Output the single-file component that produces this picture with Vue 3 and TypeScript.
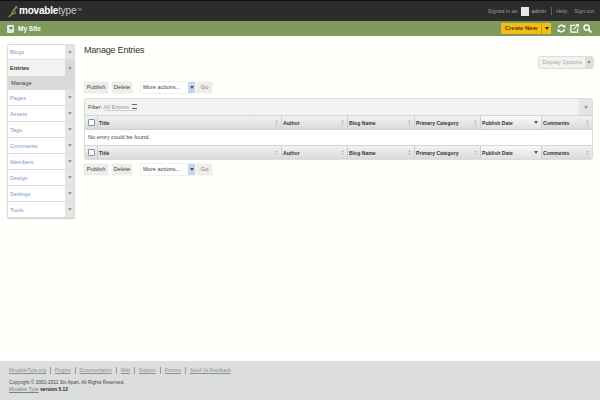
<script setup lang="ts">
interface NavItem { label: string; active?: boolean; sub?: string }
const nav: NavItem[] = [
  { label: 'Blogs' },
  { label: 'Entries', active: true, sub: 'Manage' },
  { label: 'Pages' },
  { label: 'Assets' },
  { label: 'Tags' },
  { label: 'Comments' },
  { label: 'Members' },
  { label: 'Design' },
  { label: 'Settings' },
  { label: 'Tools' },
]
const cols = [
  { label: 'Title', w: 184 },
  { label: 'Author', w: 66 },
  { label: 'Blog Name', w: 67 },
  { label: 'Primary Category', w: 66 },
  { label: 'Publish Date', w: 61, sorted: true },
  { label: 'Comments', w: 51 },
]
const links = ['MovableType.org', 'Plugins', 'Documentation', 'Wiki', 'Support', 'Forums', 'Send Us Feedback']
</script>

<template>
  <div class="page">
    <header class="top">
      <div class="logo">
        <svg width="10" height="13" viewBox="0 0 10 13" class="logo-mark">
          <path d="M0.8 12 L3 10 C4 9 4 7.5 5 6 L9 1.2" stroke="#7f9a5c" stroke-width="1.4" fill="none" />
          <path d="M3.4 8.6 H7 V5.4 M7 1.6 L9.6 3.4" stroke="#7f9a5c" stroke-width="1.1" fill="none" />
        </svg>
        <span class="logo-a">movable</span><span class="logo-b">type</span><sup class="tm">TM</sup>
      </div>
      <div class="user">
        <span>Signed in as</span>
        <span class="avatar"></span>
        <span class="uname">admin</span>
        <span class="sep"></span>
        <span>Help</span>
        <span class="signout">Sign out</span>
      </div>
    </header>

    <div class="sitebar">
      <div class="site">
        <span class="site-ico"><span class="site-tri"></span></span>
        <span>My Site</span>
      </div>
      <div class="tools">
        <div class="create">
          <span class="create-label">Create New</span>
          <span class="create-arrow"><i class="tri dark"></i></span>
        </div>
        <svg width="9" height="9" viewBox="0 0 10 10" class="tool">
          <path d="M1.5 4 A3.6 3.6 0 0 1 8 3 M8.5 6 A3.6 3.6 0 0 1 2 7" stroke="#fff" stroke-width="1.7" fill="none" />
          <path d="M9.5 0.8 L9.2 4.4 L5.9 3.2 Z M0.5 9.2 L0.8 5.6 L4.1 6.8 Z" fill="#fff" />
        </svg>
        <svg width="9" height="9" viewBox="0 0 10 10" class="tool">
          <path d="M6 1.5 H1 V9 H8.5 V5" stroke="#fff" stroke-width="1.4" fill="none" />
          <path d="M4 6 L9 1 M6.5 0.6 H9.6 V3.6" stroke="#fff" stroke-width="1.2" fill="none" />
        </svg>
        <svg width="9" height="9" viewBox="0 0 10 10" class="tool">
          <circle cx="4" cy="4" r="2.9" stroke="#fff" stroke-width="1.5" fill="none" />
          <path d="M6 6 L9.4 9.4" stroke="#fff" stroke-width="2" />
        </svg>
      </div>
    </div>

    <div class="body">
      <nav class="side">
        <template v-for="n in nav" :key="n.label">
          <div class="nav-row" :class="{ active: n.active }">
            <span class="nav-label">{{ n.label }}</span>
            <span class="nav-arrow"><i class="tri grey"></i></span>
          </div>
          <div v-if="n.sub" class="nav-sub">{{ n.sub }}</div>
        </template>
      </nav>

      <main class="main">
        <div class="title-row">
          <h1>Manage Entries</h1>
          <div class="display">
            <span class="display-label">Display Options</span>
            <span class="display-arrow"><i class="tri grey"></i></span>
          </div>
        </div>

        <div class="actions">
          <span class="btn">Publish</span>
          <span class="btn">Delete</span>
          <span class="select">More actions...<span class="sel-arrow"><i class="tri navy"></i></span></span>
          <span class="btn go">Go</span>
        </div>

        <section class="panel">
          <div class="filter">
            <span class="filter-text">Filter: <span class="filter-val">All Entries <b class="lines"></b></span></span>
            <span class="filter-arrow"><i class="tri grey"></i></span>
          </div>
          <div class="thead">
            <span class="check"><i></i></span>
            <span v-for="c in cols" :key="c.label" class="th" :class="{ sorted: c.sorted }" :style="{ width: c.w + 'px' }">
              {{ c.label }}
              <i v-if="c.sorted" class="tri navy"></i>
              <svg v-else width="3" height="5" viewBox="0 0 3 5"><path d="M1.5 0 L3 2 H0 Z M1.5 5 L3 3 H0 Z" fill="#bcbcbc" /></svg>
            </span>
          </div>
          <div class="empty">No entry could be found.</div>
          <div class="thead">
            <span class="check"><i></i></span>
            <span v-for="c in cols" :key="c.label" class="th" :class="{ sorted: c.sorted }" :style="{ width: c.w + 'px' }">
              {{ c.label }}
              <i v-if="c.sorted" class="tri navy"></i>
              <svg v-else width="3" height="5" viewBox="0 0 3 5"><path d="M1.5 0 L3 2 H0 Z M1.5 5 L3 3 H0 Z" fill="#bcbcbc" /></svg>
            </span>
          </div>
        </section>

        <div class="actions lower">
          <span class="btn">Publish</span>
          <span class="btn">Delete</span>
          <span class="select">More actions...<span class="sel-arrow"><i class="tri navy"></i></span></span>
          <span class="btn go">Go</span>
        </div>
      </main>
    </div>

    <footer class="foot">
      <div class="links">
        <span v-for="l in links" :key="l" class="flink"><u>{{ l }}</u></span>
      </div>
      <div class="copy">Copyright © 2001-2011 Six Apart. All Rights Reserved.</div>
      <div class="ver"><u>Movable Type</u> <b>version 5.12</b></div>
    </footer>
  </div>
</template>

<style scoped>
.page {
  width: 600px;
  height: 400px;
  display: flex;
  flex-direction: column;
  overflow: hidden;
  background: #fffffb;
  font-family: "Liberation Sans", Arial, sans-serif;
  font-size: 5.7px;
  color: #444;
}
.top {
  height: 21px;
  flex: none;
  box-sizing: border-box;
  background: #2c2c2a;
  border-top: 1px solid #111;
  display: flex;
  align-items: center;
  justify-content: space-between;
  padding: 0 6px 0 8px;
}
.logo { display: flex; align-items: baseline; color: #fff; font-size: 10px; letter-spacing: -0.2px; }
.logo-mark { align-self: center; margin-right: 1px; }
.logo-a { font-weight: bold; }
.logo-b { font-weight: normal; color: #ccc; }
.tm { font-size: 3px; color: #aaa; margin-left: 1px; align-self: flex-start; margin-top: 3px; }
.user { display: flex; align-items: center; color: #9a9a9a; font-size: 5.4px; }
.avatar { width: 8px; height: 9px; background: #e6e6e6; margin: 0 2px 0 4px; }
.uname { color: #aaa; }
.sep { width: 1px; height: 8px; background: #666; margin: 0 4px 0 5px; }
.signout { margin-left: 7px; }
.sitebar {
  height: 15px;
  flex: none;
  background: #7f9a5c;
  display: flex;
  align-items: center;
  justify-content: space-between;
  padding: 0 8px 0 7px;
}
.site { display: flex; align-items: center; gap: 4px; color: #fff; font-weight: bold; font-size: 6.5px; }
.site-ico {
  width: 7px;
  height: 8px;
  background: #e4e6e0;
  border-radius: 1px;
  display: flex;
  align-items: center;
  justify-content: center;
}
.site-tri { border-top: 3px solid #777; border-left: 2px solid transparent; border-right: 2px solid transparent; }
.tools { display: flex; align-items: center; }
.create {
  display: flex;
  height: 11px;
  background: #f3bd13;
  margin-right: 6px;
  color: #5a4400;
  font-weight: bold;
  font-size: 6px;
  line-height: 11px;
}
.create-label { width: 40px; text-align: center; }
.create-arrow {
  width: 9px;
  border-left: 1px solid #c99a0c;
  display: flex;
  align-items: center;
  justify-content: center;
}
.tool { margin-left: 4px; }
.tool:first-of-type { margin-left: 0; }
.tri {
  display: inline-block;
  width: 0;
  height: 0;
  border-top: 3px solid #888;
  border-left: 2px solid transparent;
  border-right: 2px solid transparent;
}
.tri.dark { border-top-color: #222; }
.tri.grey { border-top-color: #999; }
.tri.navy { border-top-color: #39598c; }

.body { flex: 1; min-height: 0; display: flex; align-items: flex-start; padding: 8px 6px 0 7px; }
.side {
  width: 68px;
  flex: none;
  box-sizing: border-box;
  border: 1px solid #dcdcdc;
  border-radius: 2px;
  background: #fff;
  box-shadow: 0 1px 1px #ccc;
}
.nav-row {
  height: 16px;
  box-sizing: border-box;
  display: flex;
  align-items: center;
  border-bottom: 1px solid #dedede;
  color: #7d9ac4;
}
.nav-row:first-child { height: 15px; }
.nav-row:last-child { border-bottom: 0; height: 15px; }
.nav-row.active { background: #f2f2f0; color: #333; font-weight: bold; border-bottom: 0; }
.nav-label { flex: 1; padding-left: 2px; }
.nav-arrow {
  width: 9px;
  align-self: stretch;
  background: #e4e5e3;
  display: flex;
  align-items: center;
  justify-content: center;
}
.active .nav-arrow { background: #d9dad8; }
.nav-sub {
  height: 14px;
  line-height: 14px;
  padding-left: 3px;
  background: #d9dad8;
  color: #444;
}

.main { flex: 1; min-width: 0; margin-left: 9px; }
.title-row { display: flex; justify-content: space-between; align-items: flex-start; height: 37px; }
h1 { margin: 0; font-size: 9px; letter-spacing: -0.2px; line-height: 12px; font-weight: normal; color: #333; }
.display {
  margin-top: 12px;
  display: flex;
  height: 13px;
  border: 1px solid #dcdcdc;
  border-radius: 3px;
  background: #f2f2f1;
  color: #a8a8a8;
  box-sizing: border-box;
  line-height: 11px;
}
.display-label { padding: 0 3px; }
.display-arrow { width: 8px; background: #dfe0de; display: flex; align-items: center; justify-content: center; }

.actions { display: flex; align-items: center; height: 12px; }
.btn {
  height: 11px;
  line-height: 11px;
  width: 24px;
  text-align: center;
  margin-right: 4px;
  background: #ededeb;
  border-radius: 1px;
  box-shadow: 0 0 1px #aaa;
  color: #444;
}
.btn + .btn { width: 20px; }
.select {
  width: 54px;
  height: 11px;
  line-height: 11px;
  box-sizing: border-box;
  padding-left: 2px;
  margin: 0 2px 0 5px;
  background: #fff;
  box-shadow: 0 0 1px #aaa;
  display: flex;
  justify-content: space-between;
  color: #444;
}
.sel-arrow {
  width: 7px;
  background: #c9d6e8;
  display: flex;
  align-items: center;
  justify-content: center;
}
.btn.go { width: 15px; color: #777; margin-right: 0; }

.panel {
  margin-top: 5px;
  box-sizing: border-box;
  width: 509px;
  border: 1px solid #dcdcdc;
  border-radius: 3px;
  background: #f2f2f1;
  overflow: hidden;
}
.filter { height: 16px; display: flex; align-items: center; justify-content: space-between; }
.filter-text { padding-left: 3px; color: #444; }
.filter-val { color: #9a9a9a; border-bottom: 1px solid #cfcfcf; }
.lines {
  display: inline-block;
  width: 5px;
  height: 3px;
  margin-left: 1px;
  border-top: 1px solid #667;
  border-bottom: 1px solid #667;
  vertical-align: 0;
}
.filter-arrow {
  width: 13px;
  align-self: stretch;
  background: #e4e5e3;
  display: flex;
  align-items: center;
  justify-content: center;
}
.thead {
  height: 13px;
  display: flex;
  align-items: stretch;
  background: linear-gradient(#f2f2f1, #d9dad9);
  border-top: 1px solid #d6d6d6;
}
.check { width: 12px; flex: none; display: flex; align-items: center; justify-content: center; }
.check i { width: 5px; height: 5px; border: 1px solid #7b93b4; background: #fff; border-radius: 1px; }
.th {
  box-sizing: border-box;
  flex: none;
  display: flex;
  align-items: center;
  justify-content: space-between;
  padding: 0 3px 0 1px;
  border-left: 1px solid #cfcfcf;
  font-size: 5.1px;
  font-weight: bold;
  color: #333;
}
.th:first-of-type { border-left: 0; padding-left: 2px; }
.th.sorted { background: linear-gradient(#fafafa, #dfe0e0); }
.empty {
  height: 15px;
  line-height: 15px;
  padding-left: 3px;
  background: #fff;
  color: #444;
  border-top: 1px solid #d0d0d0;
}
.lower { margin-top: 3px; }

.foot {
  height: 39px;
  flex: none;
  box-sizing: border-box;
  background: #dcdedd;
  padding: 5px 9px 0;
  color: #444;
  font-size: 4.8px;
  line-height: 7px;
}
.links { display: flex; color: #8a8f92; height: 8px; align-items: center; margin-bottom: 5px; }
.flink { padding-right: 4px; margin-right: 4px; border-right: 1px solid #999; }
.flink:last-child { border-right: 0; }
.copy { color: #444; }
.ver u { color: #7a8088; }
.ver b { color: #222; }
</style>
